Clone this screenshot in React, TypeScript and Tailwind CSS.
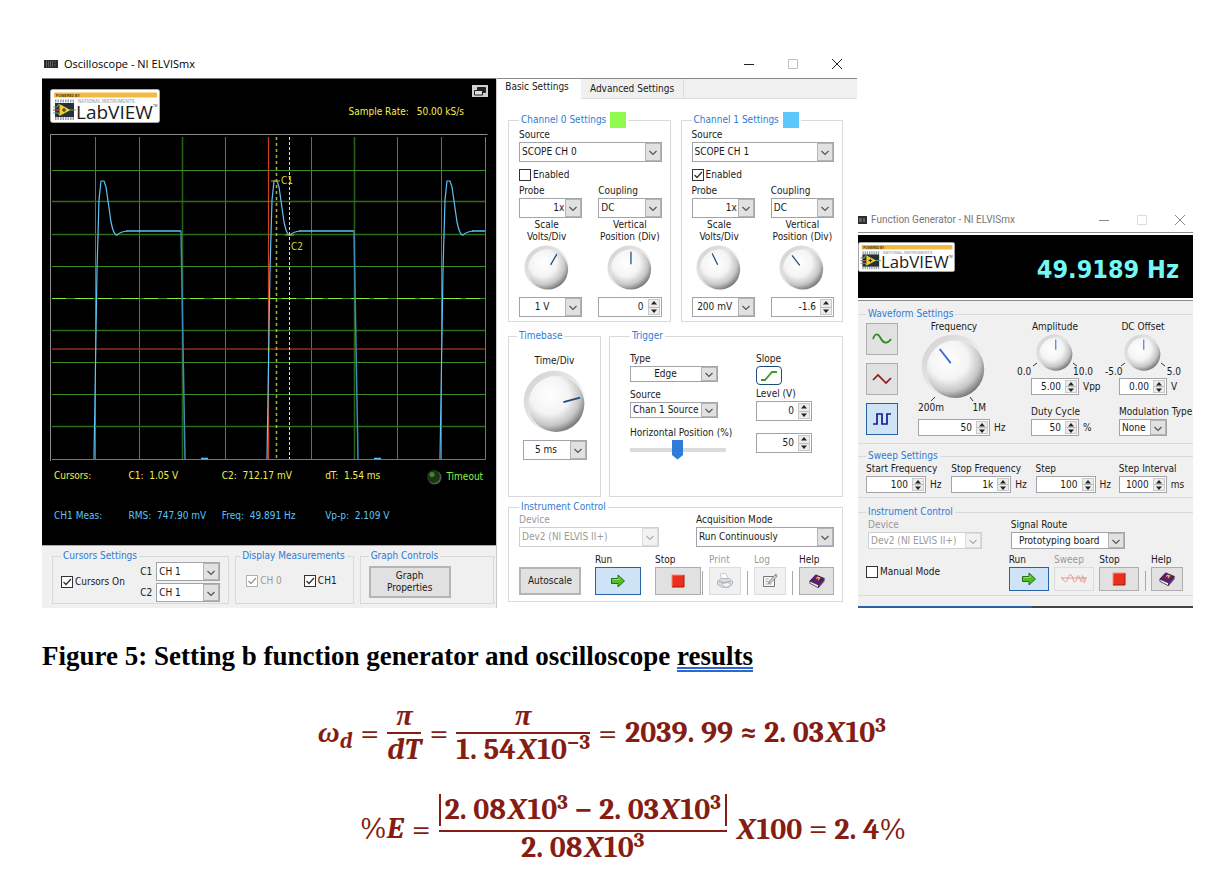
import React, { useId, useState } from "react";

type Align = "left" | "center" | "right";

const ALIGN: Record<Align, string> = {
    left: "[text-align-last:left] pl-0.5",
    center: "[text-align-last:center]",
    right: "[text-align-last:right]",
};

/* ---------- Shared controls ---------- */

function Group({ title, swatch, className = "", children }: {
    title: string; swatch?: string; className?: string; children: React.ReactNode;
}) {
    return (
        <fieldset className={`min-w-0 border border-[#d9d9d9] ${className}`}>
            <legend className={`flex items-center gap-1 px-0.5 leading-3 text-[#2f7bd5] ${swatch ? "h-4" : "h-3"}`}>
                {title}
                {swatch && <span className={`size-4 ${swatch}`} />}
            </legend>
            {children}
        </fieldset>
    );
}

function Dropdown({ label, value, options = [], align = "left", disabled, hideLabel, labelClass = "", className = "", size = "h-5" }: {
    label: string; value: string; options?: string[]; align?: Align; disabled?: boolean;
    hideLabel?: boolean; labelClass?: string; className?: string; size?: string;
}) {
    const id = useId();
    return (
        <div className={`${disabled ? "text-[#9a9a9a]" : ""} ${className}`}>
            {!hideLabel && <label htmlFor={id} className={`block whitespace-nowrap ${labelClass}`}>{label}</label>}
            <div className={`relative border bg-white ${size} ${disabled ? "border-[#d0d0d3]" : "border-[#a3a4aa]"}`}>
                <select id={id} aria-label={hideLabel ? label : undefined} defaultValue={value} disabled={disabled}
                    className={`block h-full w-full appearance-none bg-transparent pr-[17px] outline-none ${ALIGN[align]}`}>
                    {[value, ...options].map(o => <option key={o}>{o}</option>)}
                </select>
                <span className={`pointer-events-none absolute inset-y-0 right-0 flex w-4 items-center justify-center border ${disabled ? "border-[#dcdcdc] bg-[#f2f2f2]" : "border-[#b4b4b4] bg-[#e1e1e1]"}`}>
                    <svg viewBox="0 0 10 6" className="mt-0.5 w-2.5" fill="none" stroke={disabled ? "#b0b0b0" : "#555"} strokeWidth="1.2">
                        <path d="M1.5 1l3.5 3.5L8.500 1" />
                    </svg>
                </span>
            </div>
        </div>
    );
}

function Spinner({ label, value, unit, hideLabel, labelClass = "", className = "", size = "h-5", box = "w-full" }: {
    label: string; value: string; unit?: string; hideLabel?: boolean; labelClass?: string;
    className?: string; size?: string; box?: string;
}) {
    const id = useId();
    const [text, setText] = useState(value);
    const step = (n: number) => setText(t => String((parseFloat(t) || 0) + n));
    return (
        <div className={className}>
            {!hideLabel && <label htmlFor={id} className={`block whitespace-nowrap ${labelClass}`}>{label}</label>}
            <div className="flex items-center gap-1">
                <div className={`flex shrink-0 border border-[#a3a4aa] bg-white p-px ${size} ${box}`}>
                    <input id={id} aria-label={hideLabel ? label : undefined} value={text} onChange={e => setText(e.target.value)}
                        className="w-full min-w-0 pr-1 text-right outline-none" />
                    <span className="flex w-3 shrink-0 flex-col border border-[#c9c9c9] bg-[#ececec]">
                        <button type="button" aria-label={`${label} up`} onClick={() => step(1)} className="flex flex-1 items-center justify-center border-b border-[#bbb]">
                            <svg viewBox="0 0 8 4" className="w-2"><path d="M4 0l3 3.500H1z" fill="#222" /></svg>
                        </button>
                        <button type="button" aria-label={`${label} down`} onClick={() => step(-1)} className="flex flex-1 items-center justify-center">
                            <svg viewBox="0 0 8 4" className="w-2"><path d="M4 4L1 .5h6z" fill="#222" /></svg>
                        </button>
                    </span>
                </div>
                {unit && <span>{unit}</span>}
            </div>
        </div>
    );
}

function Tick({ label, checked, disabled }: { label: string; checked?: boolean; disabled?: boolean }) {
    return (
        <label className={`flex items-center gap-0.5 whitespace-nowrap ${disabled ? "text-[#9a9a9a]" : ""}`}>
            <span className="relative size-3 shrink-0">
                <input type="checkbox" defaultChecked={checked} disabled={disabled}
                    className={`peer block size-3 appearance-none border bg-white ${disabled ? "border-[#b0b0b0]" : "border-[#333]"}`} />
                <svg viewBox="0 0 12 12" fill="none" stroke={disabled ? "#999" : "#333"} strokeWidth="1.3"
                    className="pointer-events-none absolute inset-0 hidden peer-checked:block">
                    <path d="M2.500 6l2.500 2.500 5-5.500" />
                </svg>
            </span>
            {label}
        </label>
    );
}

function Knob({ label, angle, ink = "#1f4a7d", className = "size-12" }: {
    label: string; angle: number; ink?: string; className?: string;
}) {
    const id = useId().replace(/:/g, "");
    return (
        <div className={`relative ${className}`}>
            <svg viewBox="0 0 48 48" className="size-full">
                <defs>
                    <radialGradient id={`face${id}`} cx="0.38" cy="0.34" r="0.68">
                        <stop offset="0" stopColor="#fff" />
                        <stop offset="0.5" stopColor="#f4f4f4" />
                        <stop offset="0.8" stopColor="#c6c6c6" />
                        <stop offset="1" stopColor="#7c7c7c" />
                    </radialGradient>
                    <linearGradient id={`rim${id}`} x1="0" y1="0" x2="1" y2="1">
                        <stop offset="0" stopColor="#cfcfcf" />
                        <stop offset="0.5" stopColor="#e8e8e8" />
                        <stop offset="0.8" stopColor="#fafafa" />
                    </linearGradient>
                </defs>
                <circle cx="23.500" cy="23.500" r="23" fill={`url(#rim${id})`} />
                <circle cx="25" cy="25.500" r="21" fill={`url(#face${id})`} />
                <path d="M25 20v-13" stroke={ink} strokeWidth="1.3" transform={`rotate(${angle} 25 25.500)`} />
            </svg>
            <input type="range" aria-label={label} className="absolute inset-0 size-full cursor-pointer opacity-0" />
        </div>
    );
}

function ToolButton({ label, tone = "normal", disabled, className = "", children }: {
    label: string; tone?: "normal" | "active"; disabled?: boolean; className?: string; children: React.ReactNode;
}) {
    const id = useId();
    const look = disabled ? "border-[#dcdcdc] bg-[#f1f1f1]"
        : tone === "active" ? "border-[#2a63a5] bg-[#cfe3f6]" : "border-[#adadad] bg-[#e1e1e1]";
    return (
        <div>
            <label htmlFor={id} className={`block h-3.5 whitespace-nowrap ${disabled ? "text-[#9a9a9a]" : ""}`}>{label}</label>
            <button id={id} type="button" disabled={disabled} className={`flex items-center justify-center border ${look} ${className}`}>
                {children}
            </button>
        </div>
    );
}

/* ---------- Icons ---------- */

const RunIcon = () => (
    <svg viewBox="0 0 16 14" className="w-4">
        <path d="M1.500 4.500h6.500V1l6.500 6-6.500 6V9.500H1.500z" fill="#4fbf22" stroke="#2b6b17" />
        <path d="M2.500 5.500h6.500V3.500" fill="none" stroke="#93e36d" />
    </svg>
);

const StopIcon = () => (
    <svg viewBox="0 0 14 14" className="w-3.5">
        <path d="M1 1h12v12H1z" fill="#e8301c" />
        <path d="M1 13V1h12" fill="none" stroke="#f98a7c" />
        <path d="M1 13h12V1" fill="none" stroke="#a51a0c" />
    </svg>
);

const PrintIcon = () => (
    <svg viewBox="0 0 18 16" className="w-[18px]">
        <path d="M4 1l6-.5 2 5-6 1z" fill="#fff" stroke="#c4ccd4" />
        <path d="M1.500 8l4-2.500h8l3 2.500v3l-4 3.500h-6l-5-3z" fill="#dadde0" stroke="#b3b8bd" />
        <path d="M5 11l7-1.500 3 2-5 3z" fill="#eef6fb" stroke="#b8c4cc" />
        <path d="M3 8.500l5 1 7-1" fill="none" stroke="#a6abb0" />
    </svg>
);

const LogIcon = () => (
    <svg viewBox="0 0 16 16" className="w-4">
        <path d="M1.500 3.500h11v10h-11z" fill="#fafafa" stroke="#777" />
        <path d="M3.500 6h3M3.500 8.500h3M3.500 11h6" stroke="#aaa" />
        <path d="M6.500 10.500l1-2.500 5.500-6 2 1.500-6 6z" fill="#d9d3cb" stroke="#777" strokeWidth="0.8" />
        <path d="M12.500 2l1-1.500 2 1.500-1 1.500z" fill="#c98d84" />
    </svg>
);

const HelpIcon = () => (
    <svg viewBox="0 0 18 16" className="w-4">
        <path d="M1 8L7.500 1 17 5 11 12.500z" fill="#5f1a78" stroke="#2f0a40" />
        <path d="M1 8v2.500l9.500 5 .5-3z" fill="#f3f0e8" stroke="#2f0a40" strokeWidth="0.8" />
        <path d="M11 12.500l-.5 3L17 8V5z" fill="#7d2a98" stroke="#333" strokeWidth="0.8" />
        <path d="M8 5l2-1.500 2 1L10.500 6v1" fill="none" stroke="#f2c321" strokeWidth="1.400" />
    </svg>
);

const DeviceIcon = () => (
    <svg viewBox="0 0 14 8" className="w-3.5">
        <path d="M0 0h14v8H0z" fill="#2c2c2c" />
        <path d="M2 2h7M2 4h7M2 6h7M10.500 2h2M10.500 5h2" stroke="#8d8d8d" strokeDasharray="1 1" />
    </svg>
);

function WindowButtons({ muted }: { muted?: boolean }) {
    const ink = muted ? "#8a8a8a" : "#222";
    return (
        <div className={`ml-auto flex items-center ${muted ? "gap-[26px] pr-[7px]" : "gap-8 pr-3.5"}`}>
            <button type="button" aria-label="Minimize"><svg viewBox="0 0 12 12" className="w-3"><path d="M1 6.500h10" stroke={ink} /></svg></button>
            <button type="button" aria-label="Maximize"><svg viewBox="0 0 12 12" className="w-3"><path d="M1.500 1.500h9v9h-9z" fill="none" stroke={muted ? "#dcdcdc" : "#c0c0c0"} /></svg></button>
            <button type="button" aria-label="Close"><svg viewBox="0 0 12 12" className="w-3"><path d="M1 1l10 10M11 1L1 11" stroke={ink} /></svg></button>
        </div>
    );
}

function LabViewLogo({ className }: { className: string }) {
    return (
        <svg viewBox="0 0 110 34" className={className} role="img" aria-label="LabVIEW">
            <rect x="0.500" y="0.500" width="109" height="33" rx="2" fill="#fff" stroke="#aaa" />
            <path d="M4 3.500h103v5H4z" fill="#f4b942" />
            <text x="6" y="7.600" fontSize="3.500" fontWeight="700" fill="#4a3512" fontFamily="Liberation Sans, sans-serif">POWERED BY</text>
            <text x="28" y="13.500" fontSize="4.500" fontWeight="700" fill="#a9b2ba" fontFamily="Liberation Sans, sans-serif">NATIONAL INSTRUMENTS</text>
            <path d="M5 12h19M5 29.500h19" stroke="#9aa0a6" strokeWidth="3" strokeDasharray="1.500 1" />
            <path d="M5 14h19v14H5z" fill="#25303a" />
            <path d="M3 18h4l2-3M3 24h5l2 2M20 21h6" fill="none" stroke="#58a36b" strokeWidth="1.200" />
            <path d="M3 21h6" stroke="#c8503c" strokeWidth="1.200" />
            <path d="M9.500 15l11 6-11 6z" fill="#f6cb2d" />
            <path d="M12 21h4M14 19v4" stroke="#25303a" strokeWidth="1.200" />
            <text x="26" y="30" fontSize="19" fill="#1c1c1c" fontFamily="Open Sans, sans-serif">LabVIEW</text>
            <text x="103" y="18" fontSize="3" fill="#1c1c1c" fontFamily="Open Sans, sans-serif">TM</text>
        </svg>
    );
}

/* ---------- Oscilloscope ---------- */

const PULSES = [95, 268, 441];

function ScopePlot() {
    return (
        <svg viewBox="50 134 438 327" className="block w-full" fontFamily="DejaVu Sans Condensed, DejaVu Sans, sans-serif" fontSize="10">
            <path d="M50.500 461V134.500H487.500" fill="none" stroke="#8a8a8a" />
            <path d="M139.500 137V459M225.500 137V459M311.500 137V459M397.500 137V459M95.500 137V459M441.500 137V459" stroke="#3c8f22" />
            <path d="M182.500 137V459M354.500 137V459" stroke="#28611a" strokeWidth="1.600" />
            <path d="M52 170.500H485M52 266.500H485M52 362.500H485M52 394.500H485" stroke="#3c8f22" />
            <path d="M52 201.500H485M52 234.500H485M52 330.500H485M52 426.500H485" stroke="#2d6e1b" strokeWidth="1.400" />
            <path d="M52 298.500H485" stroke="#3c8f22" />
            <path d="M52 298.500H485" stroke="#86ef2c" strokeDasharray="14 9 18 5" />
            <path d="M52 349H485" stroke="#8f2f18" strokeWidth="1.500" />
            <path d="M268.500 137V459" stroke="#d1421f" strokeWidth="1.200" />
            <path d="M52 459.500H485.500V137" fill="none" stroke="#777" />
            <g clipPath="url(#plot)" fill="none" stroke="#5cc3f5" strokeWidth="1.200">
                <clipPath id="plot"><path d="M52 137h433v323H52z" /></clipPath>
                {PULSES.map(x => (
                    <g key={x}>
                        <path d={`M${x - 1} 459L${x + 2} 270L${x + 4} 200L${x + 6} 181h3L${x + 11} 187L${x + 16} 222Q${x + 19} 236 ${x + 22} 235Q${x + 26} 231.500 ${x + 32} 231`} />
                        <path d={`M${x + 31} 231H${x + 86}`} strokeWidth="1.600" />
                        <path d={`M${x + 86} 231L${x + 90} 459`} stroke="#3c8cb4" strokeWidth="1.500" />
                        <path d={`M${x + 106} 458.500h7`} strokeWidth="1.500" />
                    </g>
                ))}
            </g>
            <path d="M276.500 137V459" stroke="#b7b02e" strokeWidth="1.500" strokeDasharray="3 3" />
            <path d="M289.500 137V459" stroke="#f4f04a" strokeDasharray="3 2" />
            <path d="M271 181h9M285 235h9" stroke="#b7b02e" />
            <path d="M268.500 347v4" stroke="#86ef2c" />
            <g fill="#d8d23c">
                <text x="281" y="184">C1</text>
                <text x="291" y="250">C2</text>
            </g>
        </svg>
    );
}

function Channel({ index, swatch, enabled, scale, position, scaleAngle, posAngle }: {
    index: number; swatch: string; enabled?: boolean; scale: string; position: string; scaleAngle: number; posAngle: number;
}) {
    return (
        <Group title={`Channel ${index} Settings`} swatch={swatch} className="pr-2 pb-1 pl-2.5">
            <Dropdown label="Source" value={`SCOPE CH ${index}`} options={["AI 0"]} className="mb-1.5" />
            <Tick label="Enabled" checked={enabled} />
            <div className="mt-0.5 grid grid-cols-2 gap-x-4 gap-y-px">
                <Dropdown label="Probe" value="1x" options={["10x"]} align="right" />
                <Dropdown label="Coupling" value="DC" options={["AC"]} />
                <div className="-ml-2 flex flex-col items-center text-center leading-3 whitespace-nowrap">
                    <span>Scale<br />Volts/Div</span>
                    <Knob label="Scale knob" angle={scaleAngle} className="mt-0.5 size-[46px]" />
                </div>
                <div className="flex flex-col items-center text-center leading-3 whitespace-nowrap">
                    <span>Vertical<br />Position (Div)</span>
                    <Knob label="Vertical position knob" angle={posAngle} className="mt-0.5 size-[46px]" />
                </div>
            </div>
            <div className="mt-1.5 grid grid-cols-2 gap-x-4">
                <Dropdown label="Scale Volts/Div" value={scale} hideLabel align="center" />
                <Spinner label="Vertical Position" value={position} hideLabel />
            </div>
        </Group>
    );
}

function ScopeDisplay() {
    return (
        <div className="flex flex-col bg-[#f0f0f0]">
            <div className="border-t border-[#777] bg-black pr-2 pl-2">
                <div className="flex h-[55px] justify-between pt-2.5">
                    <LabViewLogo className="h-[34px] w-[110px]" />
                    <div className="flex flex-col items-end">
                        <button type="button" aria-label="Detach display" className="-mt-1">
                            <svg viewBox="0 0 16 12" className="w-4">
                                <path d="M0 0h16v12H0z" fill="#d0d0d0" />
                                <path d="M5.500 2.500h8v5h-8z" fill="#222" stroke="#222" />
                                <path d="M2.500 5.500h8v4.500h-8z" fill="#ddd" stroke="#222" />
                            </svg>
                        </button>
                        <span className="mt-2 mr-6 flex gap-2 text-[#f2ee4e]"><span>Sample Rate:</span><span>50.00 kS/s</span></span>
                    </div>
                </div>
                <ScopePlot />
                <div className="grid grid-cols-[75fr_94fr_104fr_102fr_62fr] pt-2 pl-1 whitespace-nowrap text-[#f2ee4e]">
                    <span>Cursors:</span>
                    <span>C1: &nbsp;1.05 V</span>
                    <span>C2: &nbsp;712.17 mV</span>
                    <span>dT: &nbsp;1.54 ms</span>
                    <span className="flex items-center gap-1 text-[#8bf24a]">
                        <svg viewBox="0 0 16 16" className="w-4 shrink-0">
                            <circle cx="8.500" cy="8.500" r="7" fill="#555" />
                            <circle cx="7.500" cy="7.500" r="6.500" fill="#17380d" />
                            <circle cx="6" cy="5.500" r="2.500" fill="#4c7f3a" />
                        </svg>
                        Timeout
                    </span>
                </div>
                <div className="grid grid-cols-[75fr_94fr_104fr_102fr_62fr] pt-6 pb-[22px] pl-1 whitespace-nowrap text-[#5cc3f5]">
                    <span>CH1 Meas:</span>
                    <span>RMS: &nbsp;747.90 mV</span>
                    <span>Freq: &nbsp;49.891 Hz</span>
                    <span>Vp-p: &nbsp;2.109 V</span>
                </div>
            </div>
            <div className="grid grid-cols-[178fr_119fr_135fr] gap-1.5 border-t border-[#aaa] pt-1 pr-0.5 pb-1 pl-2.5">
                <Group title="Cursors Settings" className="px-2 pb-px">
                    <div className="flex items-center justify-between">
                        <Tick label="Cursors On" checked />
                        <div className="space-y-0.5">
                            <Dropdown label="C1" value="CH 1" options={["CH 0"]} size="h-[19px] w-16" className="flex items-center gap-1" />
                            <Dropdown label="C2" value="CH 1" options={["CH 0"]} size="h-[19px] w-16" className="flex items-center gap-1" />
                        </div>
                    </div>
                </Group>
                <Group title="Display Measurements" className="px-1">
                    <div className="flex justify-between pt-3 pr-3 pl-1.5">
                        <Tick label="CH 0" checked disabled />
                        <Tick label="CH1" checked />
                    </div>
                </Group>
                <Group title="Graph Controls" className="px-2">
                    <button type="button" className="mt-1 block w-[82px] border-2 border-[#b5b5b5] bg-[#e1e1e1] py-0.5 text-center leading-3">
                        Graph<br />Properties
                    </button>
                </Group>
            </div>
        </div>
    );
}

function ScopeSettings() {
    return (
        <div className="flex flex-col border-l border-[#ccc] bg-white">
            <div role="tablist" className="flex h-[21px] border-t border-[#888] bg-[#f0f0f0]">
                <button type="button" role="tab" aria-selected="true" className="w-[84px] bg-white pr-1 pb-1">Basic Settings</button>
                <button type="button" role="tab" aria-selected="false" className="w-[103px] border-r border-b border-[#ddd]">Advanced Settings</button>
                <span className="flex-1 border-b border-[#ddd]" />
            </div>
            <div className="pt-[13px] pr-3.5 pb-1.5 pl-[11px]">
                <div className="grid grid-cols-2 gap-2.5">
                    <Channel index={0} swatch="bg-[#8ffb4c]" scale="1 V" position="0" scaleAngle={30} posAngle={0} />
                    <Channel index={1} swatch="bg-[#5cc8fa]" enabled scale="200 mV" position="-1.6" scaleAngle={-26} posAngle={-38} />
                </div>
                <div className="mt-2 grid grid-cols-[93fr_234fr] gap-2">
                    <Group title="Timebase" className="px-2">
                        <div className="mt-3 flex flex-col items-center">
                            <span>Time/Div</span>
                            <Knob label="Time per division" angle={75} className="mt-0.5 size-16" />
                            <Dropdown label="Time/Div" value="5 ms" hideLabel align="center" className="mt-1.5 w-16" />
                        </div>
                    </Group>
                    <Group title="Trigger" className="pr-4 pb-9 pl-5">
                        <div className="mt-2.5 flex justify-between">
                            <div className="w-[106px]">
                                <Dropdown label="Type" value="Edge" options={["Immediate"]} align="center" size="h-4" className="w-[88px]" />
                                <Dropdown label="Source" value="Chan 1 Source" options={["Chan 0 Source"]} size="h-4" className="mt-1.5 w-[88px]" />
                                <label htmlFor="hpos" className="mt-2 block whitespace-nowrap">Horizontal Position (%)</label>
                                <div className="relative flex h-5 w-24 items-center">
                                    <span className="h-1 w-full bg-[#d9dcdc]" />
                                    <svg viewBox="0 0 11 20" className="absolute left-[42px] w-[11px]"><path d="M0 0h11v15l-5.500 4.500L0 15z" fill="#2f7bd5" /></svg>
                                    <input id="hpos" type="range" defaultValue={50} className="absolute inset-0 w-full cursor-pointer opacity-0" />
                                </div>
                            </div>
                            <div className="w-[70px]">
                                <label htmlFor="slope" className="block">Slope</label>
                                <button id="slope" type="button" aria-label="Slope" className="flex h-[19px] w-[26px] items-center justify-center rounded-sm border border-[#1f4a7d] bg-white">
                                    <svg viewBox="0 0 18 12" className="w-[18px]"><path d="M1 10h4L12 2h5" fill="none" stroke="#3c9a2c" strokeWidth="1.800" /></svg>
                                </button>
                                <Spinner label="Level (V)" value="0" box="w-14" labelClass="mt-0.5" />
                                <Spinner label="Horizontal position value" value="50" hideLabel box="w-14" className="mt-3" />
                            </div>
                        </div>
                    </Group>
                </div>
                <Group title="Instrument Control" className="mt-1 pr-2 pb-1.5 pl-2.5">
                    <div className="flex items-end justify-between">
                        <Dropdown label="Device" value="Dev2 (NI ELVIS II+)" disabled className="w-[140px]" />
                        <Dropdown label="Acquisition Mode" value="Run Continuously" options={["Run Once"]} className="w-[138px]" />
                    </div>
                    <div className="mt-1.5 flex items-end justify-between">
                        <div className="flex items-end gap-3.5">
                            <button type="button" className="h-7 w-[62px] border-2 border-[#b5b5b5] bg-[#e1e1e1]">Autoscale</button>
                            <ToolButton label="Run" tone="active" className="h-7 w-[46px]"><RunIcon /></ToolButton>
                            <ToolButton label="Stop" className="h-7 w-[46px]"><StopIcon /></ToolButton>
                        </div>
                        <div className="flex items-end gap-1.5">
                            <span className="h-6 w-px bg-[#aaa]" />
                            <ToolButton label="Print" disabled className="h-7 w-8"><PrintIcon /></ToolButton>
                            <span className="h-6 w-px bg-[#aaa]" />
                            <ToolButton label="Log" disabled className="h-7 w-8"><LogIcon /></ToolButton>
                            <span className="h-6 w-px bg-[#aaa]" />
                            <ToolButton label="Help" className="h-7 w-[35px]"><HelpIcon /></ToolButton>
                        </div>
                    </div>
                </Group>
            </div>
        </div>
    );
}

function Oscilloscope() {
    return (
        <section>
            <header className="flex h-7 items-center gap-1.5 pl-0.5 font-['Open_Sans',sans-serif] text-[11px] text-black">
                <DeviceIcon />
                <h2>Oscilloscope - NI ELVISmx</h2>
                <WindowButtons />
            </header>
            <div className="grid grid-cols-[454fr_361fr]">
                <ScopeDisplay />
                <ScopeSettings />
            </div>
        </section>
    );
}

/* ---------- Function generator ---------- */

function WaveButton({ label, active, stroke, d }: { label: string; active?: boolean; stroke: string; d: string }) {
    return (
        <button type="button" aria-label={label} aria-pressed={!!active}
            className={`flex size-8 items-center justify-center border ${active ? "border-[#2a63a5] bg-[#cfe3f6]" : "border-[#adadad] bg-[#e1e1e1]"}`}>
            <svg viewBox="0 0 20 14" className="w-5" fill="none" stroke={stroke} strokeWidth="1.700"><path d={d} /></svg>
        </button>
    );
}

function MiniKnob({ label, min, max }: { label: string; min: string; max: string }) {
    return (
        <div className="flex flex-col items-center">
            <span className="whitespace-nowrap">{label}</span>
            <div className="relative">
                <Knob label={`${label} knob`} angle={0} ink="#3a62e0" className="size-[38px]" />
                <svg viewBox="0 0 46 8" className="absolute bottom-0.5 left-1/2 w-[46px] -translate-x-1/2" stroke="#333"><path d="M1 4l4-3M45 4l-4-3" /></svg>
            </div>
            <div className="-mt-1.5 flex w-full justify-between leading-3"><span>{min}</span><span>{max}</span></div>
        </div>
    );
}

function FunctionGenerator() {
    const bar = "border-x-0 pl-2 pr-1";
    return (
        <section className="min-w-0">
            <header className="flex h-6 items-center gap-1 font-['Roboto',sans-serif] text-[10px] text-[#777]">
                <svg viewBox="0 0 9 8" className="w-[9px]"><path d="M0 0h9v8H0z" fill="#2c2c2c" /><path d="M1 3h3M1 5h3M6 2v4" stroke="#999" /></svg>
                <h2>Function Generator - NI ELVISmx</h2>
                <WindowButtons muted />
            </header>
            <div className="border-y border-[#8a8a8a] py-0.5">
                <div className="flex h-[63px] items-start justify-between bg-black pr-3.5">
                    <LabViewLogo className="mt-[7px] h-[30px] w-[97px]" />
                    <output className="self-center pt-1.5 text-[25px] leading-8 font-bold text-[#74f7f5]">49.9189 Hz</output>
                </div>
            </div>
            <div className="bg-[#f0f0f0] pt-[7px]">
                <Group title="Waveform Settings" className={bar}>
                    <div className="flex pb-[7px]">
                        <div className="flex flex-col gap-2 pt-[3px]">
                            <WaveButton label="Sine" stroke="#2f8a22" d="M1 7C3 1 6 1 8.500 6S15 13 19 7" />
                            <WaveButton label="Triangle" stroke="#8b1a1a" d="M1 8L6 3l8 8 5-5" />
                            <WaveButton label="Square" active stroke="#1c1c8c" d="M1 12h4V2h5v10h5V2h4" />
                        </div>
                        <div className="ml-5 flex w-[85px] flex-col justify-between">
                            <div className="flex w-[72px] flex-col items-center">
                                <span>Frequency</span>
                                <div className="relative">
                                    <Knob label="Frequency knob" angle={-38} ink="#3a62e0" className="size-[66px]" />
                                    <svg viewBox="0 0 66 10" className="absolute -bottom-0.5 left-0 w-full" stroke="#333"><path d="M10 9l4-4M52 9l-3-4" /></svg>
                                </div>
                                <div className="mt-0.5 flex w-[72px] justify-between pr-1 leading-3"><span>200m</span><span>1M</span></div>
                            </div>
                            <Spinner label="Frequency" value="50" unit="Hz" hideLabel box="w-[72px]" size="h-[17px]" />
                        </div>
                        <div className="ml-3.5 flex gap-3">
                            <div className="w-[76px]">
                                <MiniKnob label="Amplitude" min="0.0" max="10.0" />
                                <Spinner label="Amplitude" value="5.00" unit="Vpp" hideLabel box="w-12" size="h-[17px]" className="ml-3.5" />
                                <Spinner label="Duty Cycle" value="50" unit="%" box="w-12" size="h-[17px]" labelClass="mt-2.5" className="ml-3.5" />
                            </div>
                            <div className="w-[76px]">
                                <MiniKnob label="DC Offset" min="-5.0" max="5.0" />
                                <Spinner label="DC Offset" value="0.00" unit="V" hideLabel box="w-12" size="h-[17px]" className="ml-3.5" />
                                <Dropdown label="Modulation Type" value="None" options={["AM", "FM"]} size="h-[17px] w-12" labelClass="mt-2.5" className="ml-3.5" />
                            </div>
                        </div>
                    </div>
                </Group>
                <Group title="Sweep Settings" className={`mt-1.5 pb-1 ${bar}`}>
                    <div className="grid grid-cols-[85fr_84fr_83fr_70fr]">
                        <Spinner label="Start Frequency" value="100" unit="Hz" box="w-[60px]" size="h-[17px]" />
                        <Spinner label="Stop Frequency" value="1k" unit="Hz" box="w-[60px]" size="h-[17px]" />
                        <Spinner label="Step" value="100" unit="Hz" box="w-[60px]" size="h-[17px]" />
                        <Spinner label="Step Interval" value="1000" unit="ms" box="w-12" size="h-[17px]" />
                    </div>
                </Group>
                <Group title="Instrument Control" className={`mt-2 ${bar}`}>
                    <div className="grid grid-cols-[144fr_182fr] pb-1">
                        <Dropdown label="Device" value="Dev2 (NI ELVIS II+)" disabled size="h-[17px] w-[114px]" className="pl-0.5" />
                        <Dropdown label="Signal Route" value="Prototyping board" align="center" size="h-[17px] w-[114px]" className="pl-0.5" />
                        <div className="pt-4"><Tick label="Manual Mode" /></div>
                        <div className="mt-1 flex items-end justify-between pr-1.5">
                            <ToolButton label="Run" tone="active" className="h-6 w-10"><RunIcon /></ToolButton>
                            <ToolButton label="Sweep" disabled className="h-6 w-10">
                                <svg viewBox="0 0 26 10" className="w-[26px]" fill="none" stroke="#ee9a8c"><path d="M0 4h26" stroke="#c8a8a4" /><path d="M1 3c2 6 5 6 6 1s4-4 5 1 3 3 4-1 2-3 3 1 2 4 2-1 2-1 2 3 1 1 2-4" /></svg>
                            </ToolButton>
                            <ToolButton label="Stop" className="h-6 w-10"><StopIcon /></ToolButton>
                            <span className="h-5 w-px bg-[#aaa]" />
                            <ToolButton label="Help" className="h-6 w-8"><HelpIcon /></ToolButton>
                        </div>
                    </div>
                </Group>
                <div className="mt-2.5 flex h-0.5"><span className="flex-[52] bg-[#2a63a5]" /><span className="flex-[48] bg-[#444]" /></div>
            </div>
        </section>
    );
}

/* ---------- Equations ---------- */

function Fraction({ top, bottom }: { top: React.ReactNode; bottom: React.ReactNode }) {
    return (
        <span className="inline-flex flex-col items-center">
            <span>{top}</span>
            <span className="h-0.5 w-full bg-[#861d12]" />
            <span>{bottom}</span>
        </span>
    );
}

const Sup = ({ children }: { children: React.ReactNode }) => <sup className="text-[21px]">{children}</sup>;
const X = () => <i className="mx-0.5">X</i>;
const Eq = () => <span className="text-[34px] font-normal">=</span>;

function Equations() {
    return (
        <div className="font-['Cambria','Liberation_Serif',serif] text-[30px] leading-8 font-bold whitespace-nowrap text-[#861d12]">
            <div className="mt-7 ml-[276px] flex items-center gap-2">
                <span><i>ω</i><sub className="text-[22px]"><i>d</i></sub></span>
                <Eq />
                <Fraction top={<i>π</i>} bottom={<i>dT</i>} />
                <Eq />
                <Fraction top={<i>π</i>} bottom={<>1. 54<X />10<Sup>−3</Sup></>} />
                <Eq />
                <span>2039. 99 ≈ 2. 03<X />10<Sup>3</Sup></span>
            </div>
            <div className="mt-7 ml-[318px] flex items-center gap-2">
                <span><span className="font-normal">%</span><i>E</i></span>
                <Eq />
                <Fraction
                    top={<span className="mb-1 inline-block border-x-2 border-[#861d12] px-1">2. 08<X />10<Sup>3</Sup> − 2. 03<X />10<Sup>3</Sup></span>}
                    bottom={<>2. 08<X />10<Sup>3</Sup></>}
                />
                <span><X />100 <Eq /> 2. 4<span className="font-normal">%</span></span>
            </div>
        </div>
    );
}

export default function App() {
    return (
        <main className="bg-white pt-[50px] pr-3.5 pb-4 pl-[42px] font-['DejaVu_Sans_Condensed','DejaVu_Sans',sans-serif] text-[10px] leading-[14px] text-[#1a1a1a]">
            <div className="grid grid-cols-[815fr_335fr] items-end gap-px">
                <Oscilloscope />
                <FunctionGenerator />
            </div>
            <h1 className="mt-8 font-['Liberation_Serif',serif] text-[27px] leading-8 font-bold text-black">
                Figure 5: Setting b function generator and oscilloscope{" "}
                <span className="underline decoration-[#2f66d0] decoration-double decoration-2 underline-offset-2">results</span>
            </h1>
            <Equations />
        </main>
    );
}
